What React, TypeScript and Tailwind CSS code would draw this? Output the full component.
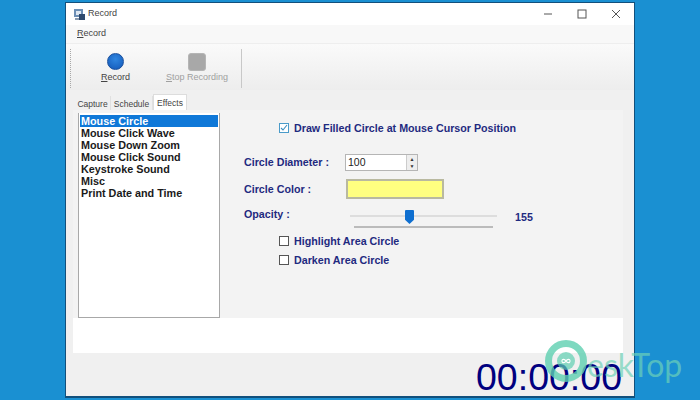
const EFFECTS = [
  "Mouse Circle",
  "Mouse Click Wave",
  "Mouse Down Zoom",
  "Mouse Click Sound",
  "Keystroke Sound",
  "Misc",
  "Print Date and Time",
];

function CheckBox({ checked }: { checked?: boolean }) {
  return (
    <span className={`flex h-[10px] w-[10px] shrink-0 items-center justify-center border bg-white ${checked ? "border-[#4a9bc9]" : "border-[#555555]"}`}>
      {checked && (
        <svg width="8" height="8" viewBox="0 0 8 8" fill="none">
          <path d="M1 4l2 2 4-5" stroke="#3d8fc0" strokeWidth="1.1" />
        </svg>
      )}
    </span>
  );
}

function WindowControls() {
  return (
    <div className="flex items-center gap-[24px] pr-[13px]">
      <svg width="10" height="10" viewBox="0 0 10 10"><path d="M1 5h8" stroke="#555" strokeWidth="1" /></svg>
      <svg width="10" height="10" viewBox="0 0 10 10"><rect x="1" y="1" width="8" height="8" fill="none" stroke="#555" strokeWidth="1" /></svg>
      <svg width="10" height="10" viewBox="0 0 10 10"><path d="M1 1l8 8M9 1l-8 8" stroke="#555" strokeWidth="1" /></svg>
    </div>
  );
}

function AppIcon() {
  return (
    <svg width="12" height="13" viewBox="0 0 12 13">
      <rect x="0" y="1" width="9" height="8" fill="#6d8fb5" />
      <rect x="2" y="3" width="5" height="4" fill="#dfe8f2" />
      <rect x="5" y="6" width="6" height="6" fill="#2f4a6d" />
      <path d="M1 10h4v2H1z" fill="#8a9bb0" />
    </svg>
  );
}

export default function App() {
  return (
    <div className="flex h-[400px] w-[700px] overflow-hidden bg-[#1a90d2] px-[65px] pt-[2px] pb-[2px] font-['Liberation_Sans',sans-serif]">
      <div className="relative flex w-full flex-col border border-[#12507c] border-b-2 bg-[#f0f0f0]">
        {/* Title bar */}
        <div className="flex h-[22px] shrink-0 items-center justify-between bg-white pl-[8px]">
          <div className="flex items-center gap-[2px] text-[9px] text-[#444444]">
            <AppIcon />
            <span>Record</span>
          </div>
          <WindowControls />
        </div>

        {/* Menu */}
        <div className="flex h-[19px] shrink-0 items-center border-b border-[#eeeeee] bg-[#f8f8f8] pl-[11px] text-[9px] text-[#444444]">
          <span><span className="underline">R</span>ecord</span>
        </div>

        {/* Toolbar */}
        <div className="flex h-[46px] shrink-0 items-stretch bg-gradient-to-b from-[#fafafa] to-[#ededed] pl-[4px] pt-[5px] pb-[2px]">
          <div className="w-[2px] border-l border-dotted border-[#a8a8a8]" />
          <div className="flex w-[67px] flex-col items-center pl-[20px] text-[9px] text-[#444444]">
            <span className="mt-[4px] h-[17px] w-[17px] rounded-full border border-[#1a4f9c] bg-[radial-gradient(circle_at_50%_35%,#2f86e0,#1257b8)]" />
            <span className="mt-[1px]"><span className="underline">R</span>ecord</span>
          </div>
          <div className="flex w-[95px] flex-col items-center pl-[21px] text-[9px] text-[#a0a0a0]">
            <span className="mt-[4px] h-[18px] w-[18px] rounded-[3px] border border-[#b5b5b5] bg-[#a8a8a8]" />
            <span className="whitespace-nowrap"><span className="underline">S</span>top Recording</span>
          </div>
          <div className="ml-[7px] w-px bg-[#c8c8c8]" />
        </div>

        {/* Tabs */}
        <div className="flex h-[20px] shrink-0 items-end pl-[9px] pt-[4px] text-[8.5px] text-[#444444]">
          <span className="flex h-[14px] w-[36px] items-center justify-center border-r border-[#e0e0e0] bg-[#f0f0f0] pt-[2px]">Capture</span>
          <span className="flex h-[14px] w-[42px] items-center justify-center border-r border-[#e0e0e0] bg-[#f0f0f0] pt-[2px]">Schedule</span>
          <span className="flex h-[16px] w-[34px] items-center justify-center border border-b-0 border-[#dddddd] bg-white pt-[1px]">Effects</span>
        </div>

        {/* Tab page */}
        <div className="ml-[7px] mr-[11px] flex h-[243px] shrink-0 flex-col bg-white">
          <div className="flex h-[208px] bg-[#f3f3f3]">
            <div className="ml-[5px] mt-[3px] w-[142px] border-r border-b border-l border-[#a8a8a8] bg-white pt-[2px] pl-[1px] pr-[1px] text-[10.8px] leading-[12px] font-bold text-[#1a1a1a]">
              {EFFECTS.map((effect, i) => (
                <div key={effect} className={i === 0 ? "h-[12px] bg-[#0f78d8] pl-[1px] text-white" : "h-[12px] pl-[1px]"}>
                  {effect}
                </div>
              ))}
            </div>

            <div className="flex min-w-0 flex-1 flex-col pl-[24px] text-[10.7px] font-bold text-[#1f2a80]">
              <div className="mt-[12px] flex h-[12px] items-center gap-[5px] pl-[35px]">
                <CheckBox checked />
                <span className="whitespace-nowrap">Draw Filled Circle at Mouse Cursor Position</span>
              </div>

              <div className="mt-[20px] flex h-[17px] items-center">
                <span className="w-[101px]">Circle Diameter :</span>
                <div className="flex h-[17px] w-[73px] items-center justify-between border border-[#b5b5b5] bg-white pl-[2px] font-normal text-[#222222]">
                  <span className="text-[10.5px]">100</span>
                  <span className="flex h-full w-[11px] flex-col items-center justify-center gap-[1px] border-l border-[#cccccc] bg-[#eeeeee] text-[5px] leading-[6px] text-[#333333]">
                    <span>▲</span>
                    <span>▼</span>
                  </span>
                </div>
              </div>

              <div className="mt-[8px] flex h-[20px] items-center">
                <span className="w-[102px]">Circle Color :</span>
                <span className="h-[20px] w-[98px] border-2 border-[#b9b9a0] bg-[#ffff80]" />
              </div>

              <div className="mt-[8px] flex h-[16px] items-center">
                <span className="w-[106px] -translate-y-[1px]">Opacity :</span>
                <div className="relative h-[16px] w-[147px]">
                  <span className="absolute left-0 top-[8px] h-[2px] w-full bg-[#dddddd]" />
                  <span className="absolute left-[55px] top-[3px] h-[14px] w-[9px] rounded-t-[1px] bg-[#0f6fd0] [clip-path:polygon(0_0,100%_0,100%_70%,50%_100%,0_70%)]" />
                </div>
                <span className="ml-[18px] translate-y-[2px] text-[#1f2a80]">155</span>
              </div>
              <span className="ml-[110px] mt-[3px] h-[2px] w-[139px] shrink-0 bg-[#bbbbbb]" />

              <div className="mt-[7px] flex h-[12px] items-center gap-[5px] pl-[35px]">
                <CheckBox />
                <span>Highlight Area Circle</span>
              </div>
              <div className="mt-[7px] flex h-[12px] items-center gap-[5px] pl-[35px]">
                <CheckBox />
                <span>Darken Area Circle</span>
              </div>
            </div>
          </div>
        </div>

        {/* Status / timer */}
        <div className="flex min-h-0 flex-1 items-end justify-end pr-[12px]">
          <span className="text-[37.5px] leading-[38px] text-[#00007f]">00:00:00</span>
        </div>

        {/* Watermark overlays the window edge */}
        <div className="absolute left-[479px] top-[337px] flex items-center">
          <span className="flex h-[42px] w-[42px] items-center justify-center rounded-full border-[7px] border-[#5ecfb0]/80">
            <span className="flex h-[18px] w-[18px] items-center justify-center rounded-full bg-[#5ecfb0]/70">
              <svg width="12" height="8" viewBox="0 0 14 10" fill="none">
                <path d="M7 5C5.500 2.500 2 2 2 5s3.500 2.500 5 0 5-3 5 0-3.500 2.500-5 0" stroke="#ffffff" strokeWidth="1.4" />
              </svg>
            </span>
          </span>
          <span className="mt-[8px] whitespace-nowrap font-['Lato',sans-serif] text-[32px] leading-[30px] text-[#6ed2b8]/70">eskTop</span>
        </div>
      </div>
    </div>
  );
}
